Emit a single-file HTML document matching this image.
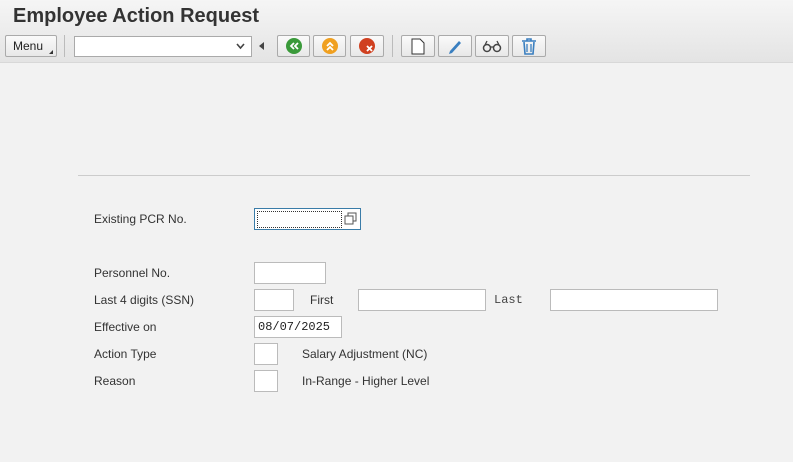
<!DOCTYPE html><html><head><style>
body{margin:0;width:793px;height:462px;background:#f2f2f2;font-family:"Liberation Sans",sans-serif;position:relative;overflow:hidden}
.a{position:absolute}
.hdr{left:0;top:0;width:793px;height:62px;background:linear-gradient(#f5f5f5,#e4e4e4);border-bottom:1px solid #d8d8d8}
.t{left:13px;top:5px;font-size:20px;font-weight:bold;color:#333}
.b{height:20px;border:1px solid #aaa;background:linear-gradient(#fafafa,#e8e8e8);border-radius:2px;top:35px}
.sep{width:1px;height:22px;background:#bbb;top:35px}
.in{background:#fff;border:1px solid #bbb;box-sizing:border-box}
.l{font-size:12px;color:#333}
.m{font-family:"Liberation Mono",monospace;font-size:12px;color:#444}
</style></head><body>
<div class="a hdr"></div>
<div class="a t">Employee Action Request</div>
<div class="a b" style="left:5px;width:50px"><span class="a" style="left:7px;top:3px;font-size:12px;color:#222">Menu</span><span class="a" style="right:3px;bottom:2px;width:0;height:0;border-left:4px solid transparent;border-bottom:4px solid #333"></span></div>
<div class="a sep" style="left:64px"></div>
<div class="a in" style="left:74px;top:36px;width:178px;height:21px;border-color:#aaa"><svg class="a" style="right:6px;top:6px" width="9" height="7"><path d="M1 1l3.5 4 3.5-4" stroke="#444" stroke-width="1.6" fill="none"/></svg></div>
<div class="a" style="left:259px;top:42px;width:0;height:0;border-top:4px solid transparent;border-bottom:4px solid transparent;border-right:5px solid #444"></div>
<div class="a b" style="left:277px;width:31px"><svg class="a" style="left:7px;top:1px" width="18" height="18"><circle cx="9" cy="9" r="8" fill="#3a9a3a"/><path d="M9 6l-3 3 3 3M13 6l-3 3 3 3" stroke="#fff" stroke-width="1.8" fill="none"/></svg></div>
<div class="a b" style="left:313px;width:31px"><svg class="a" style="left:7px;top:1px" width="18" height="18"><circle cx="9" cy="9" r="8" fill="#f0a020"/><path d="M6 9l3-3 3 3M6 13l3-3 3 3" stroke="#fff" stroke-width="1.8" fill="none"/></svg></div>
<div class="a b" style="left:350px;width:32px"><svg class="a" style="left:7px;top:1px" width="18" height="18"><circle cx="9" cy="9" r="8" fill="#d04020"/><path d="M9 9l5 5M14 9l-5 5" stroke="#fff" stroke-width="1.8"/></svg></div>
<div class="a sep" style="left:392px"></div>
<div class="a b" style="left:401px;width:32px"><svg class="a" style="left:9px;top:2px" width="14" height="17"><path d="M1 1h8l4 4v11H1z" fill="#fff" stroke="#333"/></svg></div>
<div class="a b" style="left:438px;width:32px"><svg class="a" style="left:8px;top:2px" width="16" height="16"><path d="M3 13l9-10 2 2-9 10-3 1z" fill="#3a7fc0"/></svg></div>
<div class="a b" style="left:475px;width:32px"><svg class="a" style="left:6px;top:3px" width="20" height="14"><circle cx="5" cy="9" r="3.5" fill="none" stroke="#444" stroke-width="1.5"/><circle cx="15" cy="9" r="3.5" fill="none" stroke="#444" stroke-width="1.5"/><path d="M8 8h4M3 6l2-4M17 6l-2-4" stroke="#444" stroke-width="1.3"/></svg></div>
<div class="a b" style="left:512px;width:32px"><svg class="a" style="left:8px;top:1px" width="16" height="18"><path d="M1 4h14M6 4V2h4v2M3 5l1 12h8l1-12" fill="none" stroke="#3a7fc0" stroke-width="1.6"/><path d="M6 7v8M10 7v8" stroke="#3a7fc0" stroke-width="1.3"/></svg></div>
<div class="a" style="left:78px;top:175px;width:672px;height:1px;background:#ccc"></div>
<div class="a l" style="left:94px;top:212px">Existing PCR No.</div>
<div class="a in" style="left:254px;top:208px;width:107px;height:22px;border-color:#3a7ca8"><div class="a" style="left:2px;top:2px;width:83px;height:15px;border:1px dotted #333"></div><svg class="a" style="left:89px;top:3px" width="14" height="14"><rect x="1" y="4" width="8" height="8" fill="none" stroke="#555"/><path d="M4 4V1h8v8H9" fill="none" stroke="#555"/></svg></div>
<div class="a l" style="left:94px;top:266px">Personnel No.</div>
<div class="a in" style="left:254px;top:262px;width:72px;height:22px"></div>
<div class="a l" style="left:94px;top:293px">Last 4 digits (SSN)</div>
<div class="a in" style="left:254px;top:289px;width:40px;height:22px"></div>
<div class="a l" style="left:310px;top:293px">First</div>
<div class="a in" style="left:358px;top:289px;width:128px;height:22px"></div>
<div class="a m" style="left:494px;top:293px">Last</div>
<div class="a in" style="left:550px;top:289px;width:168px;height:22px"></div>
<div class="a l" style="left:94px;top:320px">Effective on</div>
<div class="a in" style="left:254px;top:316px;width:88px;height:22px"><span class="a m" style="left:3px;top:3px;color:#222">08/07/2025</span></div>
<div class="a l" style="left:94px;top:347px">Action Type</div>
<div class="a in" style="left:254px;top:343px;width:24px;height:22px"></div>
<div class="a l" style="left:302px;top:347px">Salary Adjustment (NC)</div>
<div class="a l" style="left:94px;top:374px">Reason</div>
<div class="a in" style="left:254px;top:370px;width:24px;height:22px"></div>
<div class="a l" style="left:302px;top:374px">In-Range - Higher Level</div>
</body></html>
